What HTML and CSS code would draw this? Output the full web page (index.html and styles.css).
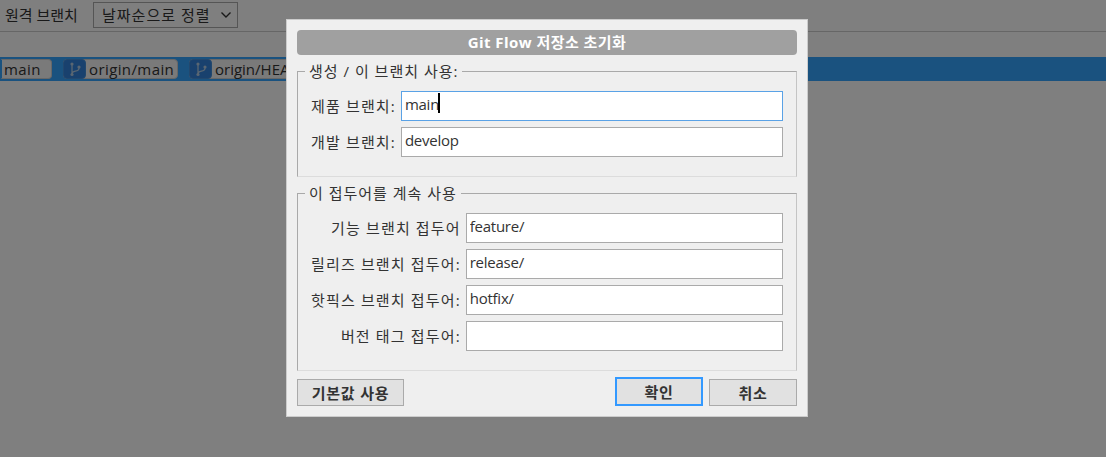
FILE: index.html
```html
<!DOCTYPE html>
<html lang="ko">

<head>
    <meta charset="UTF-8">
    <title>Git Flow 저장소 초기화</title>
    <link rel="stylesheet" href="styles.css">
</head>

<body>
    <div class="toolbar">
        <span class="toolbar-label">원격 브랜치</span>
        <div class="sort-select">
            <span>날짜순으로 정렬</span>
            <svg class="chevron" width="12" height="8" viewBox="0 0 12 8"><path d="M1.5 1.5 6 6l4.5-4.5" fill="none" stroke="#333" stroke-width="1.4"/></svg>
        </div>
    </div>

    <div class="commit-row">
        <div class="ref ref-first"><span class="ref-name">main</span></div>
        <div class="ref">
            <span class="ref-icon">
                <svg width="16" height="18" viewBox="0 0 16 18"><path d="M5 5v9M12 8c0 5-7 1.500-7 6" fill="none" stroke="#b4cde4" stroke-width="1.3"/><circle cx="5" cy="4" r="1.6" fill="#b4cde4"/><circle cx="5" cy="14.500" r="1.6" fill="#b4cde4"/><circle cx="12" cy="7" r="1.6" fill="#b4cde4"/></svg>
            </span>
            <span class="ref-name">origin/main</span>
        </div>
        <div class="ref ref-head">
            <span class="ref-icon">
                <svg width="16" height="18" viewBox="0 0 16 18"><path d="M5 5v9M12 8c0 5-7 1.500-7 6" fill="none" stroke="#b4cde4" stroke-width="1.3"/><circle cx="5" cy="4" r="1.6" fill="#b4cde4"/><circle cx="5" cy="14.500" r="1.6" fill="#b4cde4"/><circle cx="12" cy="7" r="1.6" fill="#b4cde4"/></svg>
            </span>
            <span class="ref-name">origin/HEAD</span>
        </div>
    </div>

    <div class="overlay"></div>

    <div class="dialog">
        <div class="dialog-title">Git Flow 저장소 초기화</div>

        <fieldset class="group">
            <legend>생성 / 이 브랜치 사용:</legend>
            <div class="form-grid">
                <label>제품 브랜치:</label>
                <div class="field">
                    <input class="focused" type="text" value="main">
                    <span class="caret"></span>
                </div>
                <label>개발 브랜치:</label>
                <div class="field"><input type="text" value="develop"></div>
            </div>
        </fieldset>

        <fieldset class="group group-prefix">
            <legend>이 접두어를 계속 사용</legend>
            <div class="form-grid">
                <label>기능 브랜치 접두어</label>
                <div class="field"><input type="text" value="feature/"></div>
                <label>릴리즈 브랜치 접두어:</label>
                <div class="field"><input type="text" value="release/"></div>
                <label>핫픽스 브랜치 접두어:</label>
                <div class="field"><input type="text" value="hotfix/"></div>
                <label>버전 태그 접두어:</label>
                <div class="field"><input type="text" value=""></div>
            </div>
        </fieldset>

        <div class="dialog-buttons">
            <button class="btn btn-defaults">기본값 사용</button>
            <button class="btn btn-ok">확인</button>
            <button class="btn btn-cancel">취소</button>
        </div>
    </div>
</body>

</html>
```

FILE: styles.css
```css
* {
    box-sizing: border-box;
}

html,
body {
    height: 100%;
}

body {
    margin: 0;
    overflow: hidden;
    background-color: #fff;
    color: #333;
    font-family: 'Open Sans', 'Noto Sans CJK KR', sans-serif;
    font-size: 15px;
}

.toolbar {
    display: flex;
    align-items: center;
    height: 32px;
    padding: 0 0 2px 5px;
    border-bottom: 1px solid #ccc;
}

.toolbar-label {
    width: 88px;
}

.sort-select {
    display: flex;
    align-items: center;
    justify-content: space-between;
    width: 145px;
    height: 26px;
    padding: 0 5px 0 8px;
    border: 1px solid #aaa;
    letter-spacing: 1px;
}

.commit-row {
    display: flex;
    align-items: center;
    gap: 11px;
    height: 24px;
    margin-top: 25px;
    background-color: #34a4ff;
    white-space: nowrap;
}

.ref {
    display: flex;
    align-items: center;
    height: 20px;
    background-color: #f4f4f4;
    border: 1px solid #d0d0d0;
    border-radius: 4px;
    letter-spacing: 0.4px;
}

.ref:nth-child(2) {
    width: 115px;
}

.ref-head {
    letter-spacing: 0;
}

.ref-first {
    width: 52px;
    border-left: 2px solid #34a4ff;
    border-radius: 0 4px 4px 0;
}

.ref-first .ref-name {
    padding-left: 2px;
}

.ref-icon {
    display: flex;
    align-items: center;
    justify-content: center;
    flex: none;
    width: 23px;
    height: 20px;
    margin: 0 3px 0 -1px;
    background-color: #3282dc;
    border: 1px solid #4590dc;
    border-radius: 4px;
}

.overlay {
    position: fixed;
    inset: 0;
    background-color: rgba(0, 0, 0, 0.5);
}

.dialog {
    position: absolute;
    top: 19px;
    left: 286px;
    width: 522px;
    height: 398px;
    padding: 10px;
    background-color: #efefef;
    border: 1px solid #ccc;
}

.dialog-title {
    height: 25px;
    line-height: 24px;
    margin-bottom: 6px;
    background-color: #a0a0a0;
    border-radius: 4px;
    color: #fff;
    font-weight: bold;
    letter-spacing: 0.45px;
    text-align: center;
}

.group {
    min-width: 0;
    margin: 0 0 6px;
    padding: 9px 0 19px;
    border: 1px solid;
    border-color: #a9a9a9 #c4c4c4 #dcdcdc #a9a9a9;
}

.group-prefix {
    margin-bottom: 6px;
}

.group legend {
    margin-left: 7px;
    padding: 0 4px;
    line-height: 21px;
    letter-spacing: 1px;
}

.form-grid {
    display: grid;
    grid-template-columns: auto 1fr;
    column-gap: 5px;
    row-gap: 6px;
    align-items: center;
    padding: 0 13px;
}

.form-grid label {
    padding-bottom: 2px;
    text-align: right;
    white-space: nowrap;
    letter-spacing: 1.15px;
}

.field {
    position: relative;
}

.field input {
    display: block;
    width: 100%;
    height: 30px;
    padding: 0 3px 4px;
    background-color: #fff;
    border: 1px solid #aaa;
    border-radius: 0;
    outline: none;
    color: #333;
    font-family: inherit;
    font-size: 15px;
    letter-spacing: -0.25px;
}

.field input.focused {
    border-color: #5aa2e6;
}

.caret {
    position: absolute;
    top: 2px;
    left: 37px;
    width: 2px;
    height: 20px;
    background-color: #000;
}

.dialog-buttons {
    display: flex;
    align-items: flex-end;
    height: 29px;
}

.btn {
    height: 27px;
    padding: 0;
    background-color: #e1e1e1;
    border: 1px solid #aaa;
    color: #333;
    font-family: inherit;
    font-size: 15px;
    font-weight: bold;
    letter-spacing: 0.8px;
}

.btn-defaults {
    width: 107px;
    margin-right: auto;
}

.btn-ok {
    width: 88px;
    height: 29px;
    margin-right: 6px;
    border: 2px solid #3399ff;
}

.btn-cancel {
    width: 88px;
}
```
